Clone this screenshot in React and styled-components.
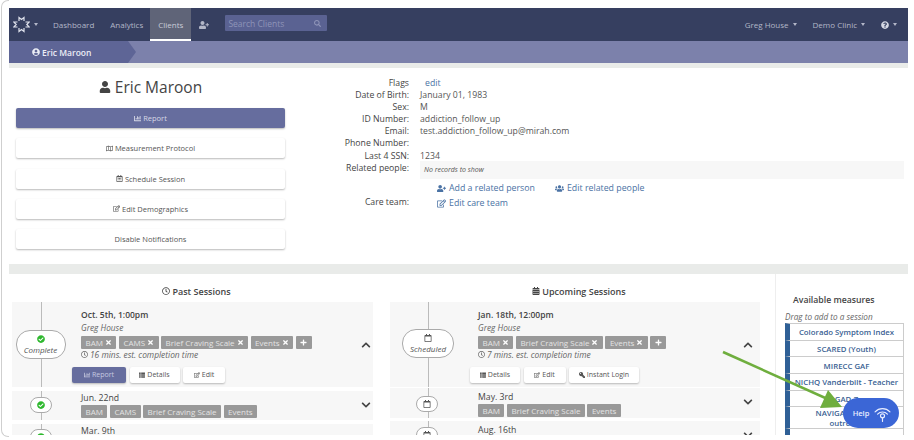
import React from "react";
import styled, { createGlobalStyle } from "styled-components";
import {
  FaUser, FaUserPlus, FaUserCircle, FaUsers, FaChartBar, FaRegMap, FaRegEdit, FaCheckCircle,
  FaRegCalendarAlt, FaRegCalendar, FaTimes, FaPlus, FaChevronUp, FaChevronDown, FaKey,
  FaRegClock, FaQuestionCircle, FaSearch, FaThList, FaCalendarAlt,
} from "react-icons/fa";

const colors = {
  nav: "#363f60",
  bar: "#7c81ab",
  crumb: "#5e6596",
  primary: "#666d9e",
  link: "#4a72a4",
  text: "#444",
  tag: "#999",
  rowBg: "#f7f7f7",
};

const GlobalStyle = createGlobalStyle`
  html, body {
    margin: 0;
    padding: 0;
    background: #fff;
    font-family: "Open Sans", "Liberation Sans", sans-serif;
    color: ${colors.text};
  }
`;

const Page = styled.div`
  position: relative;
  width: 914px;
  height: 440px;
  overflow: hidden;
  background: #fff;
  box-sizing: border-box;
  padding: 8px 6px 0 9px;
`;

const Frame = styled.div`
  position: absolute;
  left: 1px;
  top: 0;
  width: 7px;
  height: 435px;
  border: 1px solid #cfcfcf;
  border-right: none;
  border-radius: 7px 0 0 7px;
  pointer-events: none;
`;

const Nav = styled.nav`
  display: flex;
  align-items: stretch;
  height: 33px;
  background: ${colors.nav};
  font-size: 8px;
  color: #b9bdcc;
`;

const NavItem = styled.div`
  display: flex;
  align-items: center;
  gap: 3px;
  padding: 0 ${(p) => p.$pad ?? 8}px 0 ${(p) => p.$padLeft ?? p.$pad ?? 8}px;
  color: ${(p) => (p.$active ? "#c9ccd8" : "#b3b7c8")};
  background: ${(p) => (p.$active ? "#5f6478" : "transparent")};
  box-shadow: ${(p) => (p.$active ? "inset 0 -2px 0 #fff" : "none")};
`;

const Caret = styled.span`
  display: inline-block;
  border-top: 3px solid currentColor;
  border-left: 2.5px solid transparent;
  border-right: 2.5px solid transparent;
  margin-left: 1px;
`;

const Search = styled.div`
  display: flex;
  align-items: center;
  justify-content: space-between;
  width: 102px;
  height: 16px;
  margin: 7px 0 0 8px;
  padding: 0 6px 0 3px;
  box-sizing: border-box;
  background: #5a6292;
  color: #8e94b8;
  font-size: 8.5px;
  border-radius: 1px;
`;

const NavRight = styled.div`
  display: flex;
  align-items: stretch;
  margin-left: auto;
  padding-right: 3px;
`;

const SubBar = styled.div`
  display: flex;
  height: 22px;
  background: ${colors.bar};
`;

const Crumb = styled.div`
  width: 127px;
  padding-left: 23px;
  display: flex;
  align-items: center;
  gap: 2px;
  box-sizing: border-box;
  background: ${colors.crumb};
  color: #eceef6;
  font-size: 8.5px;
  font-weight: 600;
  clip-path: polygon(0 0, 119px 0, 127px 50%, 119px 100%, 0 100%);
`;

const Band = styled.div`
  height: ${(p) => p.$h}px;
  background: #e9ebe9;
`;

const Profile = styled.section`
  display: flex;
  height: 196px;
  background: #fff;
`;

const ProfileLeft = styled.div`
  width: 269px;
  margin-left: 7px;
  flex-shrink: 0;
`;

const ProfileName = styled.h1`
  margin: 0;
  height: 37px;
  padding-bottom: 3px;
  display: flex;
  align-items: center;
  justify-content: center;
  gap: 4px;
  font-size: 15.5px;
  font-weight: 400;
  color: #444;
`;

const WideButton = styled.div`
  height: 20px;
  margin-bottom: 10.3px;
  display: flex;
  align-items: center;
  justify-content: center;
  gap: 2px;
  font-size: 7.5px;
  border-radius: 2px;
  color: ${(p) => (p.$primary ? "#d6d8e6" : "#555")};
  background: ${(p) => (p.$primary ? colors.primary : "#fff")};
  box-shadow: 0 1px 2px rgba(0, 0, 0, 0.28);
`;

const Details = styled.div`
  margin-left: 58px;
  padding-top: 9px;
  width: 561px;
  font-size: 8.7px;
  line-height: 12.1px;
  color: #555;
`;

const DetailRow = styled.div`
  display: flex;
  gap: 11px;
  margin-top: ${(p) => p.$mt ?? 0}px;
`;

const DetailLabel = styled.div`
  width: 66px;
  display: flex;
  justify-content: flex-end;
  color: #444;
  white-space: nowrap;
  flex-shrink: 0;
`;

const EditLink = styled.span`
  color: ${colors.link};
  margin-left: 5px;
`;

const NoRecords = styled.div`
  flex: 1;
  height: 18px;
  margin-top: -1px;
  padding-left: 4px;
  display: flex;
  align-items: center;
  background: #f7f7f7;
  font-size: 7px;
  font-style: italic;
`;

const LinkRow = styled.div`
  display: flex;
  gap: 20px;
  padding-left: 17px;
  color: ${colors.link};
  font-size: 8.8px;
  line-height: 15px;
`;

const IconLink = styled.span`
  display: inline-flex;
  align-items: center;
  gap: 3px;
  svg {
    font-size: 9px;
  }
`;

const Sessions = styled.section`
  display: flex;
  height: 161px;
  overflow: hidden;
`;

const SessionColumn = styled.div`
  width: ${(p) => p.$w}px;
  margin-left: ${(p) => p.$ml}px;
  flex-shrink: 0;
`;

const ColumnTitle = styled.h3`
  margin: 0;
  height: 22px;
  padding: 6px 0 0 8px;
  display: flex;
  align-items: center;
  justify-content: center;
  gap: 2px;
  font-size: 9px;
  font-weight: 600;
  color: #444;
`;

const SessionRow = styled.div`
  display: flex;
  height: ${(p) => p.$h}px;
  margin-bottom: ${(p) => p.$gap ?? 3}px;
  background: ${colors.rowBg};
  overflow: hidden;
`;

const Rail = styled.div`
  position: relative;
  flex-shrink: 0;
  width: ${(p) => p.$w}px;
  display: flex;
  align-items: flex-start;
  justify-content: center;
  &::before {
    content: "";
    position: absolute;
    top: 0;
    bottom: 0;
    left: ${(p) => p.$line}px;
    width: 1px;
    background: #bbb;
  }
`;

const Bubble = styled.div`
  position: relative;
  z-index: 1;
  display: flex;
  flex-direction: column;
  align-items: center;
  justify-content: center;
  gap: 2px;
  box-sizing: border-box;
  width: ${(p) => p.$w}px;
  height: ${(p) => p.$h}px;
  margin-top: ${(p) => p.$mt ?? 0}px;
  margin-left: ${(p) => p.$ml ?? 0}px;
  border: 1px solid #aaa;
  border-radius: 14px;
  background: #fff;
  font-size: 8px;
  font-style: italic;
  line-height: 9px;
  color: #555;
  flex-shrink: 0;
`;

const RowBody = styled.div`
  flex: 1;
  padding-top: ${(p) => p.$pt ?? 7}px;
  min-width: 0;
`;

const SessionDate = styled.div`
  font-size: ${(p) => (p.$strong ? 8.5 : 8.7)}px;
  line-height: 12px;
  font-weight: ${(p) => (p.$strong ? 600 : 400)};
  color: #444;
`;

const Provider = styled.div`
  font-size: 8.3px;
  font-style: italic;
  line-height: 13px;
  color: #666;
`;

const Tags = styled.div`
  display: flex;
  gap: 2.5px;
  margin-top: ${(p) => p.$mt ?? 2}px;
`;

const Tag = styled.span`
  display: inline-flex;
  align-items: center;
  gap: 2px;
  height: 12.5px;
  padding: 0 4.5px;
  background: ${colors.tag};
  border-radius: 1px;
  color: #e4e4e4;
  font-size: 8px;
  white-space: nowrap;
  svg {
    font-size: 7px;
    color: #fff;
  }
`;

const TimeNote = styled.div`
  display: flex;
  align-items: center;
  gap: 2px;
  font-size: 8.4px;
  line-height: 12px;
  font-style: italic;
  color: #666;
`;

const Actions = styled.div`
  display: flex;
  gap: 3.5px;
  margin-top: 6px;
  margin-left: ${(p) => p.$ml}px;
`;

const SmallButton = styled.div`
  display: flex;
  align-items: center;
  justify-content: center;
  gap: 2px;
  width: ${(p) => p.$w}px;
  height: 16px;
  border-radius: 2px;
  font-size: 7px;
  color: ${(p) => (p.$primary ? "#c7cae0" : "#555")};
  background: ${(p) => (p.$primary ? colors.primary : "#fff")};
  box-shadow: 0 1px 2px rgba(0, 0, 0, 0.25);
`;

const KeyIcon = styled(FaKey)`
  transform: scaleX(-1);
`;

const Toggle = styled.div`
  width: ${(p) => p.$w}px;
  flex-shrink: 0;
  display: flex;
  justify-content: center;
  align-items: flex-start;
  padding-top: ${(p) => p.$pt}px;
  font-size: 10px;
  color: #444;
  box-sizing: border-box;
`;

const Measures = styled.aside`
  width: 119px;
  margin-left: 15px;
  padding-left: 9px;
  border-left: 1px solid #eee;
`;

const MeasuresTitle = styled.div`
  padding: 20px 0 0 8px;
  line-height: 12px;
  font-size: 8.7px;
  font-weight: 600;
  color: #444;
`;

const MeasuresHint = styled.div`
  margin-top: 5px;
  font-size: 8.2px;
  font-style: italic;
  color: #666;
  line-height: 12px;
  white-space: nowrap;
`;

const Measure = styled.div`
  display: flex;
  align-items: center;
  justify-content: center;
  text-align: center;
  box-sizing: border-box;
  min-height: 17.7px;
  padding: 1px 0 0;
  border: 1px solid #ccc;
  border-left: 5px solid #2f6096;
  margin-bottom: -1px;
  color: #3a5f93;
  font-size: 7.8px;
  font-weight: 600;
  line-height: 10px;
  white-space: pre-line;
`;

const HelpButton = styled.div`
  position: absolute;
  left: 843px;
  top: 398px;
  width: 56px;
  height: 30px;
  padding-left: 2px;
  box-sizing: border-box;
  border-radius: 15px;
  background: #3b66d6;
  color: #e8edff;
  display: flex;
  align-items: center;
  justify-content: center;
  gap: 5px;
  font-size: 7.5px;
  font-weight: 600;
`;

const ArrowOverlay = styled.svg`
  position: absolute;
  left: 720px;
  top: 345px;
  width: 130px;
  height: 70px;
  pointer-events: none;
`;

const HelpIcon = () => (
  <svg width="17" height="17" viewBox="0 0 16 16" fill="none" stroke="#e8edff" strokeWidth="1.1" strokeLinecap="round">
    <path d="M1 6.5a9.6 9.6 0 0 1 14 0" />
    <path d="M3.4 8.6a6.2 6.2 0 0 1 9.2 0" />
    <circle cx="8" cy="10.2" r="1.9" />
    <path d="M8 12.1V15.5" />
  </svg>
);

const LogoIcon = () => (
  <svg width="17" height="17" viewBox="0 0 17 17" fill="none" stroke="#dfe2ec" strokeWidth="1.2">
    <path d="M6 5V1.5l2.5 2 2.5-2V5" />
    <path d="M6 12v3.5l2.5-2 2.5 2V12" />
    <path d="M4.5 6H0.8l2.4 2.5L0.8 11h3.7" />
    <path d="M12.5 6h3.7l-2.4 2.5 2.4 2.5h-3.7" />
  </svg>
);

const pastRows = [
  { date: "Jun. 22nd", tags: ["BAM", "CAMS", "Brief Craving Scale", "Events"], h: 29, gap: 4, top: 6 },
  { date: "Mar. 9th", tags: [], h: 30, gap: 0, top: 5 },
];

const upcomingRows = [
  { date: "May. 3rd", tags: ["BAM", "Brief Craving Scale", "Events"], h: 30, gap: 3, top: 8 },
  { date: "Aug. 16th", tags: [], h: 30, gap: 0, top: 6 },
];

const measures = [
  "Colorado Symptom Index",
  "SCARED (Youth)",
  "MIRECC GAF",
  "NICHQ Vanderbilt - Teacher",
  "GAD-7",
  "NAVIGATE Client\noutreach",
  "",
];

const TagList = ({ names, removable, mt }) => (
  <Tags $mt={mt}>
    {names.map((name) => (
      <Tag key={name}>
        {name}
        {removable && <FaTimes />}
      </Tag>
    ))}
    {removable && (
      <Tag>
        <FaPlus />
      </Tag>
    )}
  </Tags>
);

export default function App() {
  return (
    <Page>
      <GlobalStyle />
      <Frame />
      <Nav>
        <NavItem $pad={6} $padLeft={4}>
          <LogoIcon />
          <Caret />
        </NavItem>
        <NavItem $pad={9}>Dashboard</NavItem>
        <NavItem $pad={7}>Analytics</NavItem>
        <NavItem $active $pad={8}>Clients</NavItem>
        <NavItem $pad={8}>
          <FaUserPlus size={10} />
        </NavItem>
        <Search>
          Search Clients
          <FaSearch size={7} />
        </Search>
        <NavRight>
          <NavItem $pad={8}>Greg House <Caret /></NavItem>
          <NavItem $pad={8}>Demo Clinic <Caret /></NavItem>
          <NavItem $pad={8}>
            <FaQuestionCircle size={8} color="#d5d8e4" /> <Caret />
          </NavItem>
        </NavRight>
      </Nav>
      <SubBar>
        <Crumb>
          <FaUserCircle size={8} /> Eric Maroon
        </Crumb>
      </SubBar>
      <Band $h={5} />
      <Profile>
        <ProfileLeft>
          <ProfileName>
            <FaUser size={12} /> Eric Maroon
          </ProfileName>
          <WideButton $primary><FaChartBar size={7} /> Report</WideButton>
          <WideButton><FaRegMap size={7} /> Measurement Protocol</WideButton>
          <WideButton><FaRegCalendarAlt size={7} /> Schedule Session</WideButton>
          <WideButton><FaRegEdit size={7} /> Edit Demographics</WideButton>
          <WideButton>Disable Notifications</WideButton>
        </ProfileLeft>
        <Details>
          <DetailRow><DetailLabel>Flags</DetailLabel><EditLink>edit</EditLink></DetailRow>
          <DetailRow><DetailLabel>Date of Birth:</DetailLabel>January 01, 1983</DetailRow>
          <DetailRow><DetailLabel>Sex:</DetailLabel>M</DetailRow>
          <DetailRow><DetailLabel>ID Number:</DetailLabel>addiction_follow_up</DetailRow>
          <DetailRow><DetailLabel>Email:</DetailLabel>test.addiction_follow_up@mirah.com</DetailRow>
          <DetailRow><DetailLabel>Phone Number:</DetailLabel></DetailRow>
          <DetailRow><DetailLabel>Last 4 SSN:</DetailLabel>1234</DetailRow>
          <DetailRow>
            <DetailLabel>Related people:</DetailLabel>
            <NoRecords>No records to show</NoRecords>
          </DetailRow>
          <DetailRow $mt={2}>
            <DetailLabel />
            <LinkRow>
              <IconLink><FaUserPlus /> Add a related person</IconLink>
              <IconLink><FaUsers /> Edit related people</IconLink>
            </LinkRow>
          </DetailRow>
          <DetailRow>
            <DetailLabel>Care team:</DetailLabel>
            <LinkRow>
              <IconLink><FaRegEdit /> Edit care team</IconLink>
            </LinkRow>
          </DetailRow>
        </Details>
      </Profile>
      <Band $h={10} />
      <Sessions>
        <SessionColumn $w={361} $ml={3}>
          <ColumnTitle><FaRegClock size={8} /> Past Sessions</ColumnTitle>
          <SessionRow $h={85} $gap={4}>
            <Rail $w={69} $line={29}>
              <Bubble $w={50} $h={29} $mt={28} $ml={-12}>
                <FaCheckCircle size={8} color="#2eb82e" />
                Complete
              </Bubble>
            </Rail>
            <RowBody>
              <SessionDate $strong>Oct. 5th, 1:00pm</SessionDate>
              <Provider>Greg House</Provider>
              <TagList names={["BAM", "CAMS", "Brief Craving Scale", "Events"]} removable />
              <TimeNote><FaRegClock size={7} /> 16 mins. est. completion time</TimeNote>
              <Actions $ml={-9}>
                <SmallButton $primary $w={54}><FaChartBar size={6} /> Report</SmallButton>
                <SmallButton $w={50}><FaThList size={6} /> Details</SmallButton>
                <SmallButton $w={42}><FaRegEdit size={6} /> Edit</SmallButton>
              </Actions>
            </RowBody>
            <Toggle $w={14} $pt={38}><FaChevronUp /></Toggle>
          </SessionRow>
          {pastRows.map((row) => (
            <SessionRow key={row.date} $h={row.h} $gap={row.gap}>
              <Rail $w={69} $line={29}>
                <Bubble $w={22} $h={16} $mt={row.top} $ml={-11}>
                  <FaCheckCircle size={8} color="#2eb82e" />
                </Bubble>
              </Rail>
              <RowBody $pt={1}>
                <SessionDate>{row.date}</SessionDate>
                <TagList names={row.tags} mt={1} />
              </RowBody>
              <Toggle $w={14} $pt={9}><FaChevronDown /></Toggle>
            </SessionRow>
          ))}
        </SessionColumn>
        <SessionColumn $w={370} $ml={17}>
          <ColumnTitle><FaCalendarAlt size={8} /> Upcoming Sessions</ColumnTitle>
          <SessionRow $h={85} $gap={1}>
            <Rail $w={88} $line={38}>
              <Bubble $w={52} $h={29} $mt={27} $ml={-12}>
                <FaRegCalendar size={8} />
                Scheduled
              </Bubble>
            </Rail>
            <RowBody>
              <SessionDate $strong>Jan. 18th, 12:00pm</SessionDate>
              <Provider>Greg House</Provider>
              <TagList names={["BAM", "Brief Craving Scale", "Events"]} removable />
              <TimeNote><FaRegClock size={7} /> 7 mins. est. completion time</TimeNote>
              <Actions $ml={-8}>
                <SmallButton $w={50}><FaThList size={6} /> Details</SmallButton>
                <SmallButton $w={42}><FaRegEdit size={6} /> Edit</SmallButton>
                <SmallButton $w={70}><KeyIcon size={6} /> Instant Login</SmallButton>
              </Actions>
            </RowBody>
            <Toggle $w={24} $pt={38}><FaChevronUp /></Toggle>
          </SessionRow>
          {upcomingRows.map((row) => (
            <SessionRow key={row.date} $h={row.h} $gap={row.gap}>
              <Rail $w={88} $line={38}>
                <Bubble $w={22} $h={16} $mt={row.top} $ml={-14}>
                  <FaRegCalendar size={8} />
                </Bubble>
              </Rail>
              <RowBody $pt={3}>
                <SessionDate>{row.date}</SessionDate>
                <TagList names={row.tags} mt={1} />
              </RowBody>
              <Toggle $w={24} $pt={9}><FaChevronDown /></Toggle>
            </SessionRow>
          ))}
        </SessionColumn>
        <Measures>
          <MeasuresTitle>Available measures</MeasuresTitle>
          <MeasuresHint>Drag to add to a session</MeasuresHint>
          {measures.map((name) => (
            <Measure key={name || "blank"}>{name}</Measure>
          ))}
        </Measures>
      </Sessions>
      <ArrowOverlay viewBox="0 0 130 70">
        <line x1="3" y1="7" x2="112" y2="56" stroke="#6fae3e" strokeWidth="2.5" />
        <polygon points="122,62 108,45 100,63" fill="#6fae3e" />
      </ArrowOverlay>
      <HelpButton>Help <HelpIcon /></HelpButton>
    </Page>
  );
}
